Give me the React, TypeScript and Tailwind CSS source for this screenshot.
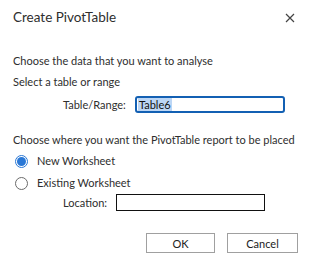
import * as React from 'react';

function Radio({checked}: {checked: boolean}) {
  if (checked) {
    return (
      <span className="flex h-[13px] w-[13px] items-center justify-center rounded-full border border-[#2a78d6] bg-white">
        <span className="h-[9px] w-[9px] rounded-full bg-[#2a78d6]"></span>
      </span>
    );
  }
  return <span className="h-[13px] w-[13px] rounded-full border border-[#6b6b6b] bg-white"></span>;
}

export default function App() {
  return (
    <div className="w-[312px] h-[266px] bg-white text-[#2e2e2e] font-['Lato',sans-serif] text-[11px] whitespace-nowrap overflow-hidden">
      <div className="h-[36px] flex items-center justify-between pl-[13px] pr-[17px]">
        <span className="text-[13.5px] leading-none">Create PivotTable</span>
        <svg width="10" height="10" viewBox="0 0 10 10" className="text-[#444]">
          <path d="M1 1L9 9M9 1L1 9" stroke="currentColor" strokeWidth="1.2" />
        </svg>
      </div>
      <div className="pl-[13px] flex flex-col">
        <div className="mt-[17px] h-[16px] leading-[16px]">Choose the data that you want to analyse</div>
        <div className="mt-[5px] h-[16px] leading-[16px]">Select a table or range</div>
        <div className="mt-[6px] h-[17px] flex items-center pl-[50px]">
          <span className="w-[72px] leading-[16px]">Table/Range:</span>
          <div className="w-[150px] h-[17px] border-2 border-[#1360b3] rounded-[3px] flex items-center px-[1px]">
            <span className="bg-[#bcd6f5] text-[#111] leading-[13px] px-[1px]">Table6</span>
          </div>
        </div>
        <div className="mt-[19px] h-[16px] leading-[16px]">Choose where you want the PivotTable report to be placed</div>
        <div className="mt-[5px] h-[16px] flex items-center gap-[9px] pl-[2px]">
          <Radio checked={true} />
          <span className="leading-[16px]">New Worksheet</span>
        </div>
        <div className="mt-[6px] h-[16px] flex items-center gap-[9px] pl-[2px]">
          <Radio checked={false} />
          <span className="leading-[16px]">Existing Worksheet</span>
        </div>
        <div className="mt-[3px] h-[17px] flex items-center pl-[50px]">
          <span className="w-[53px] leading-[16px]">Location:</span>
          <div className="w-[149px] h-[17px] border border-[#111]"></div>
        </div>
        <div className="mt-[22px] flex justify-end gap-[12px] pr-[14px]">
          <button className="w-[69px] h-[20px] border border-[#a0a0a0] bg-white text-[11px] leading-none text-[#222]">OK</button>
          <button className="w-[71px] h-[20px] border border-[#a0a0a0] bg-white text-[11px] leading-none text-[#222]">Cancel</button>
        </div>
      </div>
    </div>
  );
}
